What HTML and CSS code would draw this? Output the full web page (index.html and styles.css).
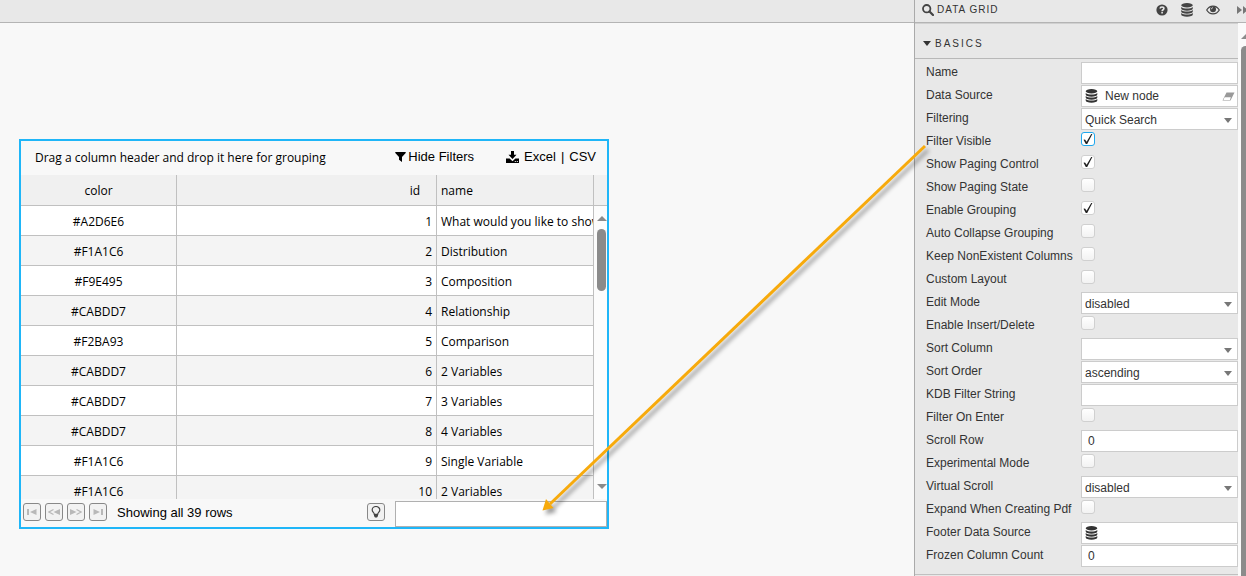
FILE: index.html
```html
<!DOCTYPE html>
<html lang="en">
<head>
<meta charset="utf-8">
<title>Data Grid</title>
<link rel="stylesheet" href="styles.css">
</head>
<body>
<svg class="defs" aria-hidden="true">
  <symbol id="db" viewBox="0 0 12 14">
    <ellipse cx="6" cy="2.300" rx="5.800" ry="2.200"/>
    <path d="M.2 3.900C1.400 5.200 3.600 5.500 6 5.500s4.600-.3 5.800-1.600v1.700C11.800 6.900 9.300 7.800 6 7.800S.2 6.900.2 5.600z"/>
    <path d="M.2 6.900C1.400 8.200 3.600 8.500 6 8.500s4.600-.3 5.800-1.600v1.700c0 1.300-2.500 2.200-5.800 2.200S.2 9.900.2 8.600z"/>
    <path d="M.2 9.900c1.200 1.300 3.400 1.600 5.800 1.600s4.600-.3 5.800-1.600v1.700c0 1.300-2.500 2.200-5.800 2.200S.2 12.900.2 11.600z"/>
  </symbol>
</svg>
<div class="app">
  <main class="workspace">
    <div class="topbar"></div>
    <div class="canvas">
      <section class="widget">
        <div class="group-bar">
          <span class="hint">Drag a column header and drop it here for grouping</span>
          <div class="tools">
            <button class="tool" type="button"><svg width="11" height="10" viewBox="0 0 11 10"><path d="M.3 0h10.400v1L7 4.900V10L4 7.700V4.900L.3 1z"/></svg>Hide Filters</button>
            <div class="export">
              <svg width="13" height="12" viewBox="0 0 13 12"><path d="M5 0h3v3.800h2.500L6.500 8 2.500 3.800H5z"/><path fill-rule="evenodd" d="M0 7.500h3.600L6.500 10.200l2.900-2.700H13V12H0zM8.800 10v1h1v-1zM10.800 10v1h1v-1z"/></svg>
              <button class="tool" type="button">Excel</button><span>|</span><button class="tool" type="button">CSV</button>
            </div>
          </div>
        </div>
        <div class="grid-area">
          <div class="table-clip">
            <table class="grid">
              <colgroup><col class="c-color"><col class="c-id"><col class="c-name"></colgroup>
              <thead><tr><th>color</th><th>id</th><th>name</th></tr></thead>
              <tbody>
                <tr><td>#A2D6E6</td><td>1</td><td>What would you like to show</td></tr>
                <tr><td>#F1A1C6</td><td>2</td><td>Distribution</td></tr>
                <tr><td>#F9E495</td><td>3</td><td>Composition</td></tr>
                <tr><td>#CABDD7</td><td>4</td><td>Relationship</td></tr>
                <tr><td>#F2BA93</td><td>5</td><td>Comparison</td></tr>
                <tr><td>#CABDD7</td><td>6</td><td>2 Variables</td></tr>
                <tr><td>#CABDD7</td><td>7</td><td>3 Variables</td></tr>
                <tr><td>#CABDD7</td><td>8</td><td>4 Variables</td></tr>
                <tr><td>#F1A1C6</td><td>9</td><td>Single Variable</td></tr>
                <tr><td>#F1A1C6</td><td>10</td><td>2 Variables</td></tr>
              </tbody>
            </table>
          </div>
          <div class="grid-side">
            <div class="side-head"></div>
            <div class="scroll">
              <span class="arrow-up"></span><span class="thumb"></span><span class="arrow-down"></span>
            </div>
          </div>
        </div>
        <div class="pager">
          <button type="button" class="pg" aria-label="First page"><svg width="10" height="6" viewBox="0 0 10 6"><path d="M0 0h2v6H0zM9.500 0v6L3 3z"/></svg></button>
          <button type="button" class="pg" aria-label="Previous page"><svg width="12" height="6" viewBox="0 0 12 6"><path d="M5.500.5L1 3l4.500 2.500" fill="none" stroke="#b8b8b8" stroke-width="1.200"/><path d="M12 0v6L5.500 3z"/></svg></button>
          <button type="button" class="pg" aria-label="Next page"><svg width="12" height="6" viewBox="0 0 12 6"><path d="M6.500.5L11 3 6.500 5.500" fill="none" stroke="#b8b8b8" stroke-width="1.200"/><path d="M0 0v6l6.500-3z"/></svg></button>
          <button type="button" class="pg" aria-label="Last page"><svg width="10" height="6" viewBox="0 0 10 6"><path d="M8 0h2v6H8zM.5 0v6L7 3z"/></svg></button>
          <span class="status">Showing all 39 rows</span>
          <button type="button" class="pg bulb" aria-label="Hints"><svg width="10" height="12" viewBox="0 0 10 12"><path d="M3.300 8.300C3.300 6.700 1.200 6 1.200 3.900a3.800 3.400 0 0 1 7.600 0C8.800 6 6.700 6.700 6.700 8.300z" fill="none" stroke="#444" stroke-width="1.200"/><path d="M3 8h4v2L6 11.500H4L3 10z" fill="#444"/></svg></button>
          <input class="quick" type="text" aria-label="Quick search">
        </div>
      </section>
    </div>
  </main>
  <aside class="sidebar">
    <header class="panel-head">
      <svg width="12" height="12" viewBox="0 0 12 12"><circle cx="4.700" cy="4.700" r="3.700" fill="none" stroke="#444" stroke-width="1.800"/><path d="M7.500 7.500l3.500 3.500" stroke="#444" stroke-width="2.200" stroke-linecap="round"/></svg>
      <h1>DATA GRID</h1>
      <div class="head-icons">
        <button type="button" aria-label="Help"><svg width="12" height="12" viewBox="0 0 12 12"><circle cx="6" cy="6" r="5.600"/><path d="M4.100 4.500C4.200 2.400 7.900 2.500 7.900 4.500 7.900 5.800 6.100 5.700 6.100 7.200" fill="none" stroke="#e8e8e8" stroke-width="1.600"/><path d="M5.300 8.100h1.600v1.500H5.300z" fill="#e8e8e8"/></svg></button>
        <button type="button" aria-label="Data"><svg width="12" height="14"><use href="#db"/></svg></button>
        <button type="button" aria-label="Preview"><svg width="14" height="10" viewBox="0 0 14 10"><path d="M.7 5C3.700-.3 10.300-.3 13.300 5 10.300 10.200 3.700 10.200.7 5z" fill="none" stroke="#444" stroke-width="1.200"/><circle cx="7" cy="4.300" r="3"/><path d="M5.300 4.300Q5.400 2.800 7 2.600" fill="none" stroke="#e8e8e8" stroke-width=".8"/></svg></button>
        <button type="button" aria-label="Collapse"><svg width="12" height="8" viewBox="0 0 12 8" fill="#777"><path d="M0 0l5 4-5 4zM6 0l5 4-5 4z"/></svg></button>
      </div>
    </header>
    <div class="panel-body">
      <div class="panel-main">
        <h2><span class="tri"></span>BASICS</h2>
        <form class="props">
          <div class="row"><label for="p1">Name</label><input id="p1" class="field" type="text"></div>
          <div class="row"><label for="p2">Data Source</label><div class="field source"><svg width="13" height="14"><use href="#db"/></svg><input id="p2" type="text" value="New node"><svg width="13" height="9" viewBox="0 0 13 9"><path d="M4.500.5h8L8.500 8.500h-8z" fill="#999"/><path d="M2.600 5.200h6.200L7.900 7.900H1.400z" fill="#fff"/></svg></div></div>
          <div class="row"><label for="p3">Filtering</label><div class="pick"><select id="p3" class="field"><option>Quick Search</option></select></div></div>
          <div class="row"><label for="p4">Filter Visible</label><input id="p4" class="focus" type="checkbox" checked></div>
          <div class="row"><label for="p5">Show Paging Control</label><input id="p5" type="checkbox" checked></div>
          <div class="row"><label for="p6">Show Paging State</label><input id="p6" type="checkbox"></div>
          <div class="row"><label for="p7">Enable Grouping</label><input id="p7" type="checkbox" checked></div>
          <div class="row"><label for="p8">Auto Collapse Grouping</label><input id="p8" type="checkbox"></div>
          <div class="row"><label for="p9">Keep NonExistent Columns</label><input id="p9" type="checkbox"></div>
          <div class="row"><label for="p10">Custom Layout</label><input id="p10" type="checkbox"></div>
          <div class="row"><label for="p11">Edit Mode</label><div class="pick"><select id="p11" class="field"><option>disabled</option></select></div></div>
          <div class="row"><label for="p12">Enable Insert/Delete</label><input id="p12" type="checkbox"></div>
          <div class="row"><label for="p13">Sort Column</label><div class="pick"><select id="p13" class="field"><option></option></select></div></div>
          <div class="row"><label for="p14">Sort Order</label><div class="pick"><select id="p14" class="field"><option>ascending</option></select></div></div>
          <div class="row"><label for="p15">KDB Filter String</label><input id="p15" class="field" type="text"></div>
          <div class="row"><label for="p16">Filter On Enter</label><input id="p16" type="checkbox"></div>
          <div class="row"><label for="p17">Scroll Row</label><input id="p17" class="field" type="text" value="0"></div>
          <div class="row"><label for="p18">Experimental Mode</label><input id="p18" type="checkbox"></div>
          <div class="row"><label for="p19">Virtual Scroll</label><div class="pick"><select id="p19" class="field"><option>disabled</option></select></div></div>
          <div class="row"><label for="p20">Expand When Creating Pdf</label><input id="p20" type="checkbox"></div>
          <div class="row"><label for="p21">Footer Data Source</label><div class="field source"><svg width="13" height="14"><use href="#db"/></svg><input id="p21" type="text"></div></div>
          <div class="row"><label for="p22">Frozen Column Count</label><input id="p22" class="field" type="text" value="0"></div>
        </form>
      </div>
      <div class="panel-scroll"><span class="arrow-up"></span><span class="thumb"></span></div>
    </div>
  </aside>
  <svg class="pointer" aria-hidden="true">
    <path d="M925 146L550 504" stroke="#f7aa0c" stroke-width="3" fill="none"/>
    <path d="M542.500 510.500L546 499l7.500 9z" fill="#f7aa0c"/>
  </svg>
</div>
</body>
</html>
```

FILE: styles.css
```css
* { box-sizing: border-box; }
html, body { height: 100%; }
body {
  margin: 0;
  overflow: hidden;
  background: #f8f8f8;
  color: #333;
  font: 12px/20px "Liberation Sans", Arial, sans-serif;
}
button { padding: 0; border: 0; background: none; color: inherit; font: inherit; cursor: pointer; }
input, select { margin: 0; font: inherit; color: inherit; }
svg { display: block; flex: none; }
.defs { position: absolute; width: 0; height: 0; }
.app { position: relative; display: flex; height: 100%; }

/* Workspace */
.workspace { flex: 1; min-width: 0; display: flex; flex-direction: column; }
.topbar { flex: none; height: 23px; background: #e8e8e8; border-bottom: 1px solid #b4b4b4; }
.canvas { flex: 1; min-height: 0; padding: 116px 19px 0; }
.widget {
  width: 590px;
  border: 2px solid #1fb6f8;
  background: #f8f8f8;
  color: #000;
}
.group-bar {
  display: flex;
  justify-content: space-between;
  height: 34px;
  padding: 0 11px 0 14px;
}
.hint { padding-top: 7px; font: 12px/20px "Open Sans", "Noto Sans", sans-serif; }
.tools { display: flex; gap: 32px; align-items: center; height: 31px; font-size: 13px; }
.tool { display: flex; align-items: center; gap: 2px; }
.export { display: flex; align-items: center; gap: 5px; }

.grid-area { display: flex; height: 324px; overflow: hidden; }
.table-clip { flex: 1; min-width: 0; overflow: hidden; }
.grid {
  width: 100%;
  table-layout: fixed;
  border-collapse: separate;
  border-spacing: 0;
  font: 12px/20px "Open Sans", "Noto Sans", sans-serif;
}
.c-color { width: 156px; }
.c-id { width: 260px; }
.grid th, .grid td {
  padding: 2px 4px 0;
  border-right: 1px solid #c0c0c0;
  border-bottom: 1px solid #c0c0c0;
  font-weight: 400;
  text-align: left;
  white-space: nowrap;
  overflow: hidden;
}
.grid th { height: 31px; background: #f0f0f0; }
.grid td { height: 30px; background: #fff; }
.grid tbody tr:nth-child(even) td { background: #f4f4f4; }
.grid th:first-child, .grid td:first-child { text-align: center; }
.grid th:nth-child(2), .grid td:nth-child(2) { text-align: right; }
.grid th:nth-child(2) { padding-right: 16px; }
.grid td:last-child { padding-right: 0; }
.grid-side { width: 13px; display: flex; flex-direction: column; }
.side-head { height: 31px; background: #f0f0f0; border-bottom: 1px solid #c0c0c0; }
.scroll { flex: 1; display: flex; flex-direction: column; align-items: center; padding: 10px 0 10px 2px; background: #fcfcfc; }
.arrow-up { border: 5px solid transparent; border-top: 0; border-bottom: 5px solid #8b8b8b; }
.arrow-down { margin-top: auto; border: 5px solid transparent; border-bottom: 0; border-top: 5px solid #8b8b8b; }
.thumb { width: 9px; height: 62px; margin-top: 8px; border-radius: 5px; background: #8b8b8b; }

.pager { display: flex; align-items: flex-start; height: 28px; padding: 2px 0 0 2px; gap: 4px; font-size: 13px; }
.pg {
  display: flex;
  align-items: center;
  justify-content: center;
  width: 18px;
  height: 18px;
  margin-top: 2px;
  border: 1px solid #888;
  border-radius: 3px;
  background: #f2f2f2;
  fill: #b8b8b8;
}
.status { flex: 1; margin: 2px 0 0 6px; }
.quick { width: 212px; height: 26px; margin-left: 6px; border: 1px solid #b0b0b0; background: #fff; }

/* Property panel */
.sidebar {
  width: 332px;
  flex: none;
  display: flex;
  flex-direction: column;
  overflow: hidden;
  border-left: 1px solid #aaa;
  background: #e8e8e8;
}
.panel-head {
  flex: none;
  display: flex;
  align-items: center;
  gap: 3px;
  height: 23px;
  padding: 0 0 3px 7px;
  border-bottom: 1px solid #b4b4b4;
  fill: #444;
}
h1, h2 { margin: 0; font-size: 10px; font-weight: 400; line-height: 20px; }
h1 { letter-spacing: 1px; }
h2 {
  display: flex;
  align-items: center;
  gap: 4px;
  height: 36px;
  padding: 5px 0 0 8px;
  border-top: 1px solid #d0d0d0;
  border-bottom: 1px solid #b8b8b8;
  letter-spacing: 2px;
}
.tri { border: 4px solid transparent; border-top: 5px solid #333; border-bottom: 0; }
.head-icons { display: flex; align-items: center; gap: 13px; margin-left: auto; margin-right: -3px; }
.head-icons button:last-child { margin-left: 4px; }
.panel-body { flex: 1; display: flex; min-height: 0; }
.panel-main { flex: 1; min-width: 0; }
.props { padding: 3px 0 6px 11px; border-bottom: 1px solid #c0c0c0; }
.row { display: grid; grid-template-columns: 155px minmax(0, 1fr); height: 23px; align-items: start; }
.field {
  width: 100%;
  height: 22px;
  padding: 0 6px;
  border: 1px solid #ccc;
  border-radius: 0;
  background: #fff;
}
.source { display: flex; align-items: center; gap: 7px; padding: 0 2px 0 3px; fill: #333; }
.source input { flex: 1; min-width: 0; padding: 0; border: 0; background: none; }
.pick { position: relative; }
.pick select { display: block; appearance: none; padding: 1px 20px 0 3px; }
.pick::after {
  content: "";
  position: absolute;
  right: 6px;
  top: 10px;
  border: 4px solid transparent;
  border-top: 5px solid #777;
  border-bottom: 0;
}
input[type="checkbox"] {
  appearance: none;
  width: 14px;
  height: 14px;
  margin-top: 1px;
  border: 1px solid #d0d0d0;
  border-radius: 3px;
  background: linear-gradient(#fff, #f2f2f2);
  display: grid;
  place-items: center;
}
input[type="checkbox"]:checked { background: #fff; }
input[type="checkbox"]:checked::before {
  content: "";
  width: 10px;
  height: 10px;
  background: #222;
  clip-path: polygon(5% 58%, 20% 54%, 36% 78%, 82% 0, 94% 0, 42% 100%, 28% 100%);
}
input[type="checkbox"].focus { border-color: #1fa8ee; }
.panel-scroll { width: 8px; padding: 11px 0 0 3px; background: #fafafa; overflow: hidden; display: flex; flex-direction: column; align-items: flex-start; }
.panel-scroll .thumb { flex: 1; margin-top: 7px; width: 9px; flex-shrink: 0; border-radius: 5px 5px 0 0; }

.pointer {
  position: absolute;
  inset: 0;
  width: 100%;
  height: 100%;
  pointer-events: none;
  filter: drop-shadow(3px 4px 2px rgba(0, 0, 0, .4));
}
```
